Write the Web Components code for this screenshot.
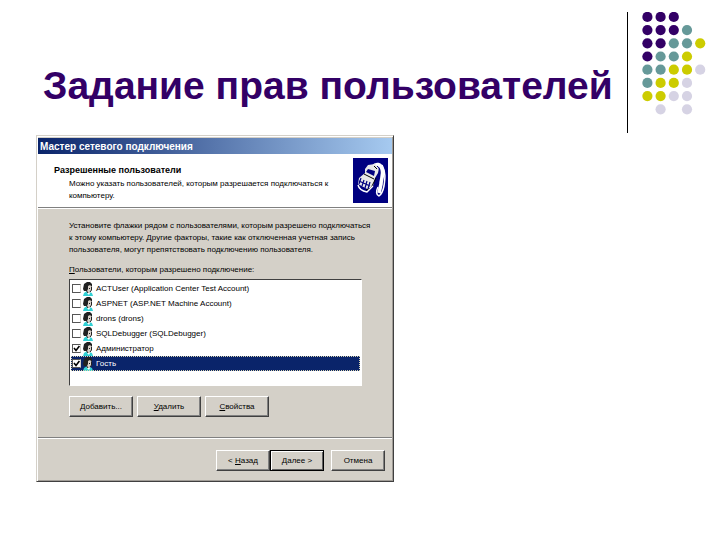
<!DOCTYPE html>
<html lang="ru">
<head>
<meta charset="utf-8">
<title>Задание прав пользователей</title>
<style>
    body {
        margin: 0;
        background: #fff;
        font-family: "Liberation Sans", sans-serif;
    }
</style>
</head>
<body>
<lecture-slide>
    <span slot="title">Задание прав пользователей</span>
    <wizard-dialog caption="Мастер сетевого подключения">
        <wizard-header slot="header" heading="Разрешенные пользователи">Можно указать пользователей, которым разрешается подключаться к компьютеру.</wizard-header>
        <wizard-text>Установите флажки рядом с пользователями, которым разрешено подключаться к этому компьютеру. Другие факторы, такие как отключенная учетная запись пользователя, могут препятствовать подключению пользователя.</wizard-text>
        <user-list>
            <span slot="label"><u>П</u>ользователи, которым разрешено подключение:</span>
            <user-item>ACTUser (Application Center Test Account)</user-item>
            <user-item>ASPNET (ASP.NET Machine Account)</user-item>
            <user-item>drons (drons)</user-item>
            <user-item>SQLDebugger (SQLDebugger)</user-item>
            <user-item checked>Администратор</user-item>
            <user-item checked selected>Гость</user-item>
        </user-list>
        <win-button slot="tools"><u>Д</u>обавить...</win-button>
        <win-button slot="tools"><u>У</u>далить</win-button>
        <win-button slot="tools"><u>С</u>войства</win-button>
        <win-button slot="steps">&lt; <u>Н</u>азад</win-button>
        <win-button slot="steps" primary>Далее &gt;</win-button>
        <win-button slot="cancel">Отмена</win-button>
    </wizard-dialog>
</lecture-slide>

<script>
class LectureSlide extends HTMLElement {
    connectedCallback() {
        this.attachShadow({ mode: 'open' });
        this.shadowRoot.innerHTML = `
            <style>
                :host {
                    display: block;
                }

                header {
                    display: flex;
                    align-items: flex-start;
                    padding: 12px 14px 0 43px;
                }

                h1 {
                    flex: 1;
                    margin: 0;
                    padding-top: 52px;
                    font-size: 39px;
                    line-height: 44px;
                    color: #330066;
                    white-space: nowrap;
                }

                dot-pattern {
                    border-left: 1px solid #000;
                }

                main {
                    display: grid;
                    grid-template-columns: 358fr 290fr;
                    padding: 2px 36px;
                }
            </style>
            <header>
                <h1><slot name="title"></slot></h1>
                <dot-pattern></dot-pattern>
            </header>
            <main><slot></slot></main>
        `;
    }
}

class DotPattern extends HTMLElement {
    connectedCallback() {
        const colors = { p: '#330066', t: '#669999', y: '#cccc00', g: '#d6d3e4' };
        const rows = ['ppp', 'pppt', 'pptty', 'ptty', 'ttyyg', 'tyyg', 'yygg', ' g g'];
        const dots = rows.map((row, y) => [...row].map((c, x) => c === ' ' ? '' :
            `<circle cx="${19.4 + x * 13.2}" cy="${4.9 + y * 13.2}" r="5.1" fill="${colors[c]}"/>`
        ).join('')).join('');
        this.attachShadow({ mode: 'open' });
        this.shadowRoot.innerHTML = `
            <style>
                :host {
                    display: block;
                }

                svg {
                    display: block;
                }
            </style>
            <svg width="78" height="121" viewBox="0 0 78 121" aria-hidden="true">${dots}</svg>
        `;
    }
}

class WizardDialog extends HTMLElement {
    connectedCallback() {
        this.attachShadow({ mode: 'open' });
        this.shadowRoot.innerHTML = `
            <style>
                :host {
                    display: block;
                    box-sizing: border-box;
                    background: #d4d0c8;
                    border: 1px solid #d4d0c8;
                    border-right-color: #404040;
                    border-bottom-color: #404040;
                    box-shadow: inset 1px 1px #fff, inset -1px -1px #a09c96;
                    padding: 2px 1px;
                    font-size: 8px;
                    line-height: 12px;
                    color: #000;
                }

                .caption {
                    padding: 2px 2px 1px;
                    font-size: 10px;
                    line-height: 13px;
                    font-weight: bold;
                    color: #fff;
                    background: linear-gradient(to right, #0a246a, #a6caf0);
                }

                .body {
                    padding: 12px 30px 20px 31px;
                }

                .tools,
                footer {
                    display: flex;
                }

                .tools {
                    gap: 4px;
                    margin-top: 10px;
                }

                footer {
                    justify-content: flex-end;
                    gap: 7px;
                    padding: 12px 7px 8px;
                    border-top: 1px solid #808080;
                    box-shadow: inset 0 1px #fff;
                }

                .steps {
                    display: flex;
                }
            </style>
            <div class="caption">${this.getAttribute('caption')}</div>
            <slot name="header"></slot>
            <div class="body">
                <slot></slot>
                <div class="tools"><slot name="tools"></slot></div>
            </div>
            <footer>
                <div class="steps"><slot name="steps"></slot></div>
                <slot name="cancel"></slot>
            </footer>
        `;
    }
}

class WizardHeader extends HTMLElement {
    connectedCallback() {
        this.attachShadow({ mode: 'open' });
        this.shadowRoot.innerHTML = `
            <style>
                :host {
                    display: flex;
                    justify-content: space-between;
                    padding: 4px 4px 4px 16px;
                    background: #fff;
                    border-bottom: 1px solid #808080;
                    box-shadow: 0 1px #fff;
                }

                h2 {
                    margin: 6px 0 2px;
                    font-size: 9px;
                    line-height: 12px;
                }

                p {
                    margin: 0 16px 0 15px;
                }

                svg {
                    flex: none;
                    display: block;
                }
            </style>
            <div>
                <h2>${this.getAttribute('heading')}</h2>
                <p><slot></slot></p>
            </div>
            <svg width="35" height="45" viewBox="0 0 35 45" aria-hidden="true">
                <path fill="#000080" d="M0 0h35v45H0z"/>
                <path fill="none" stroke="#fff" stroke-width="3.6" d="M20 9c3-4 8-3 9 2 2 6-1 10-1 15l-2 9"/>
                <path fill="none" stroke="#fff" stroke-width="1.5" d="M29 7c4 7 3 14 2 21-1 5-2 8-5 10-3-1-3-5-1-9"/>
                <path fill="#e8e8e8" d="M12 11l3-4 7-1 4 4-1 5-3 5-2 8-4 4-11-6 1-6 6-5z"/>
                <path fill="#000080" d="M15 11l7 2-1 5-8-4z"/>
                <path fill="none" stroke="#000" d="M11 16l10 5M13 32l5-2 5-10M21 8l3 3"/>
                <path fill="none" stroke="#000080" stroke-width="1.2" d="M8 20l-2 6M11 22l-2 6M14 23l-2 7M17 24l-2 7M6 23l11 5"/>
                <path fill="none" stroke="#fff" stroke-width="1.4" d="M5 27c1 4 4 6 9 7l6-6"/>
                <path fill="none" stroke="#000080" d="M24 8c4 3 3 8 1 12l-1 6"/>
            </svg>
        `;
    }
}

class WizardText extends HTMLElement {
    connectedCallback() {
        this.attachShadow({ mode: 'open' });
        this.shadowRoot.innerHTML = `
            <style>
                :host {
                    display: block;
                    margin: 0 -10px 8px 0;
                }

                p {
                    margin: 0;
                }
            </style>
            <p><slot></slot></p>
        `;
    }
}

class UserList extends HTMLElement {
    connectedCallback() {
        this.attachShadow({ mode: 'open' });
        this.shadowRoot.innerHTML = `
            <style>
                :host {
                    display: block;
                }

                .label {
                    margin-bottom: 3px;
                }

                .box {
                    display: grid;
                    grid-auto-rows: 15px;
                    padding: 1px 1px 14px;
                    background: #fff;
                    border: 1px solid;
                    border-color: #404040 #fff #fff #404040;
                }
            </style>
            <div class="label" id="label"><slot name="label"></slot></div>
            <div class="box" role="group" aria-labelledby="label"><slot></slot></div>
        `;
    }
}

class UserItem extends HTMLElement {
    connectedCallback() {
        this.attachShadow({ mode: 'open' });
        this.shadowRoot.innerHTML = `
            <style>
                :host {
                    display: flex;
                    align-items: center;
                    padding-left: 1px;
                }

                :host([selected]) {
                    color: #fff;
                    background: #0a246a;
                    outline: 1px dotted #d8d4b0;
                    outline-offset: -1px;
                }

                input {
                    appearance: none;
                    width: 9px;
                    height: 9px;
                    margin: 0;
                    border: 1px solid;
                    border-color: #555 #d4d0c8 #555 #555;
                    background: #fff;
                }

                .check {
                    display: grid;
                    margin-right: 1px;
                }

                .check > * {
                    grid-area: 1 / 1;
                }

                .tick {
                    display: none;
                    pointer-events: none;
                }

                input:checked + .tick {
                    display: block;
                }

                label {
                    display: flex;
                    align-items: center;
                    white-space: nowrap;
                }

                .user {
                    margin-right: 2px;
                }
            </style>
            <span class="check">
                <input type="checkbox" id="user">
                <svg class="tick" width="9" height="9" viewBox="0 0 9 9" aria-hidden="true">
                    <path fill="none" stroke="#000" stroke-width="1.6" d="M2 4l2 2.4L7.4 2"/>
                </svg>
            </span>
            <label for="user">
                <svg class="user" width="12" height="15" viewBox="0 0 12 15" aria-hidden="true">
                    <path fill="#30d0d4" d="M1 15l1-3 3-2 5 2 1 3z"/>
                    <path fill="#d8d0c8" d="M4 4h5l1 4-2 4H5z"/>
                    <path fill="#202020" d="M1 8l1-5 3-2h3l2 2v3L8 4 6 5v3l-1 2H2z"/>
                    <path fill="none" stroke="#202020" d="M9.5 6v3l-1.5 2M4 9l2 3M7 7.5h1"/>
                    <path fill="#fff" d="M5 12h3l-1 2z"/>
                </svg>
                <slot></slot>
            </label>
        `;
        this.shadowRoot.querySelector('input').checked = this.hasAttribute('checked');
    }
}

class WinButton extends HTMLElement {
    connectedCallback() {
        this.attachShadow({ mode: 'open' });
        this.shadowRoot.innerHTML = `
            <style>
                :host {
                    display: block;
                }

                :host([slot="tools"]) {
                    min-width: 64px;
                }

                button {
                    display: block;
                    width: 100%;
                    min-width: 54px;
                    height: 21px;
                    padding: 0;
                    font: inherit;
                    color: #000;
                    background: #d4d0c8;
                    border: 1px solid;
                    border-color: #fff #404040 #404040 #fff;
                    box-shadow: inset -1px -1px #808080;
                }

                :host([primary]) button {
                    border-color: #000;
                    box-shadow: inset 1px 1px #fff, inset -1px -1px #606060;
                }
            </style>
            <button type="button"><slot></slot></button>
        `;
    }
}

customElements.define('lecture-slide', LectureSlide);
customElements.define('dot-pattern', DotPattern);
customElements.define('wizard-dialog', WizardDialog);
customElements.define('wizard-header', WizardHeader);
customElements.define('wizard-text', WizardText);
customElements.define('user-list', UserList);
customElements.define('user-item', UserItem);
customElements.define('win-button', WinButton);
</script>
</body>
</html>
